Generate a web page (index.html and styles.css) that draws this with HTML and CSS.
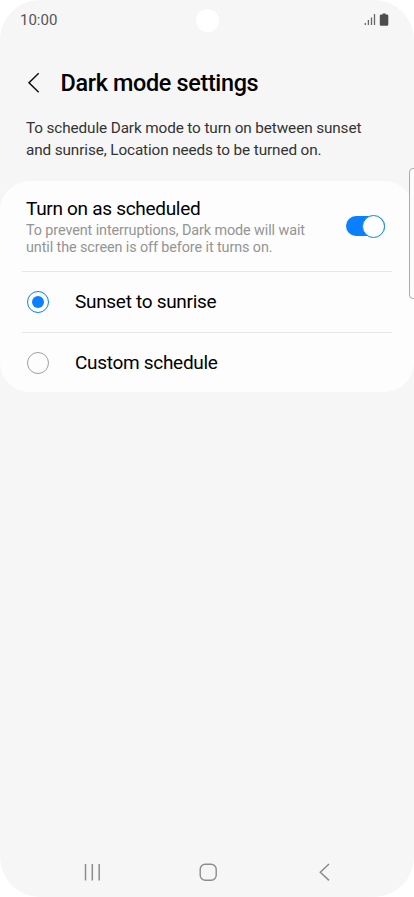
FILE: index.html
```html
<!DOCTYPE html>
<html lang="en">
<head>
  <meta charset="UTF-8">
  <meta name="viewport" content="width=device-width, initial-scale=1.0">
  <title>Dark mode settings</title>
  <link rel="stylesheet" href="styles.css">
</head>
<body>

<div class="phone">
  <div class="status-bar">
    <span class="time">10:00</span>
    <span class="camera"></span>
    <svg class="status-icons" width="26" height="14" viewBox="0 0 26 14">
      <path d="M1.3 10v2M4.400 7v5M7.500 4.500v7.500M10.500 1v11" stroke="#666" stroke-width="1.300" fill="none"/>
      <path d="M18.600 0.500h3v1h1.500q1.200 0 1.200 1.300v8.700q0 1.300-1.200 1.300h-6q-1.300 0-1.300-1.300V2.800q0-1.300 1.300-1.300h1.500z" fill="#4d4d4d"/>
    </svg>
  </div>

  <header class="header">
    <svg class="back" width="14" height="22" viewBox="0 0 14 22">
      <path d="M12.700 1.300L3 10.800l9.700 9.500" fill="none" stroke="#111" stroke-width="1.500"/>
    </svg>
    <h1>Dark mode settings</h1>
  </header>

  <p class="intro">To schedule Dark mode to turn on between sunset<br>and sunrise, Location needs to be turned on.</p>

  <main class="card">
    <div class="row schedule">
      <div class="schedule-text">
        <h2>Turn on as scheduled</h2>
        <p>To prevent interruptions, Dark mode will wait<br>until the screen is off before it turns on.</p>
      </div>
      <span class="switch"><span class="knob"></span></span>
    </div>
    <div class="row option">
      <span class="radio checked"></span>
      <span class="label">Sunset to sunrise</span>
    </div>
    <div class="row option">
      <span class="radio"></span>
      <span class="label">Custom schedule</span>
    </div>
  </main>

  <div class="edge-handle"></div>

  <nav class="nav-bar">
    <svg width="20" height="20" viewBox="0 0 20 20">
      <path d="M3.500 2v16.500M10.300 2v16.500M17.200 2v16.500" fill="none" stroke="#8c8c8c" stroke-width="1.500"/>
    </svg>
    <svg width="20" height="20" viewBox="0 0 20 20">
      <rect x="1.200" y="2.200" width="16" height="16" rx="5" fill="none" stroke="#8c8c8c" stroke-width="1.400"/>
    </svg>
    <svg width="20" height="20" viewBox="0 0 20 20">
      <path d="M14 2L5.300 10.200 14 18.400" fill="none" stroke="#8c8c8c" stroke-width="1.500"/>
    </svg>
  </nav>
</div>

</body>
</html>
```

FILE: styles.css
```css
* {
  margin: 0;
  padding: 0;
  box-sizing: border-box;
}

body {
  background: #fff;
  font-family: Roboto, sans-serif;
  color: #000;
}

.phone {
  position: relative;
  width: 414px;
  height: 897px;
  display: flex;
  flex-direction: column;
  background: #f6f6f6;
  border-radius: 40px;
  overflow: hidden;
}

.status-bar {
  height: 40px;
  padding: 0 24px 0 20px;
  display: grid;
  grid-template-columns: 176px 23px 1fr;
  align-items: center;
}

.time {
  font-size: 15px;
  color: #555;
}

.camera {
  width: 23px;
  height: 23px;
  border-radius: 50%;
  background: #fff;
}

.status-icons {
  justify-self: end;
}

.header {
  height: 86px;
  padding: 0 26px;
  display: flex;
  align-items: center;
  gap: 20.5px;
}

h1 {
  font-size: 23.4px;
  font-weight: 500;
  letter-spacing: -0.33px;
}

.intro {
  height: 55px;
  padding: 0 26px;
  margin-top: -9px;
  margin-bottom: 9px;
  font-size: 15.3px;
  letter-spacing: -0.11px;
  line-height: 22px;
  color: #333;
  white-space: nowrap;
}

.card {
  height: 211px;
  padding: 0 22px;
  background: #fdfdfd;
  border-radius: 30px;
}

.row {
  display: flex;
  align-items: center;
}

.row + .row {
  border-top: 1px solid #e6e6e6;
}

.schedule {
  height: 90px;
  padding: 0 7px 0 4px;
  justify-content: space-between;
}

.schedule-text h2 {
  padding-top: 1px;
  font-size: 19px;
  letter-spacing: -0.3px;
  line-height: 24px;
  font-weight: 400;
}

.schedule-text p {
  margin-top: 2px;
  font-size: 14.4px;
  letter-spacing: -0.1px;
  line-height: 16.5px;
  color: #949494;
  white-space: nowrap;
}

.switch {
  width: 39px;
  height: 20px;
  display: flex;
  align-items: center;
  justify-content: flex-end;
  background: #0a80ff;
  border-radius: 10px;
}

.knob {
  width: 23px;
  height: 23px;
  flex: none;
  background: #fff;
  border: 1px solid #0a80ff;
  border-radius: 50%;
}

.option {
  height: 61px;
  padding: 0 5px 1px;
  gap: 26px;
}

.radio {
  width: 22px;
  height: 22px;
  display: grid;
  place-items: center;
  border: 1px solid #a0a0a0;
  border-radius: 50%;
}

.radio.checked {
  border-color: #0a80ff;
}

.radio.checked::after {
  content: "";
  width: 12px;
  height: 12px;
  background: #0a80ff;
  border-radius: 50%;
}

.label {
  font-size: 19px;
  letter-spacing: -0.3px;
}

.edge-handle {
  position: absolute;
  top: 168px;
  right: -6px;
  width: 11px;
  height: 131px;
  background: #fbfbfb;
  border: 1px solid #aaa;
  border-radius: 4px;
}

.nav-bar {
  height: 50px;
  margin-top: auto;
  padding: 0 79px 0 82px;
  display: flex;
  align-items: center;
  justify-content: space-between;
}
```
